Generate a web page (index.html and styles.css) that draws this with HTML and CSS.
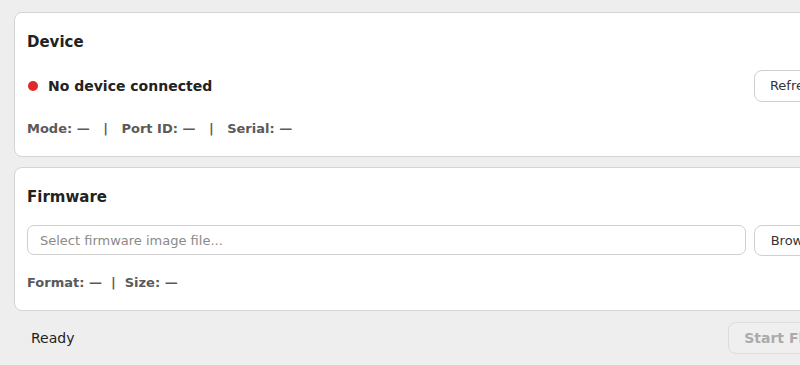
FILE: index.html
```html
<!DOCTYPE html>
<html lang="en">
<head>
	<meta charset="UTF-8">
	<title>Firmware Flasher</title>
	<link rel="stylesheet" href="styles.css">
</head>
<body>
	<div class="app">
		<!-- device -->
		<div class="card">
			<div class="card-title">Device</div>
			<div class="row">
				<span class="dot"></span>
				<span class="status-text">No device connected</span>
				<button class="btn btn-right">Refresh</button>
			</div>
			<div class="meta meta-wide">
				<span>Mode: —</span><span class="sep">|</span>
				<span>Port ID: —</span><span class="sep">|</span>
				<span>Serial: —</span>
			</div>
		</div>
		<!-- firmware -->
		<div class="card">
			<div class="card-title">Firmware</div>
			<div class="row row-file">
				<input type="text" class="file-input" placeholder="Select firmware image file...">
				<button class="btn">Browse</button>
			</div>
			<div class="meta">
				<span>Format: —</span><span class="sep">|</span>
				<span>Size: —</span>
			</div>
		</div>
		<!-- status bar -->
		<div class="footer">
			<span class="ready">Ready</span>
			<button class="btn btn-flash" disabled>Start Flash</button>
		</div>
	</div>
</body>
</html>
```

FILE: styles.css
```css
*{
	margin:0;
	padding:0;
	box-sizing:border-box;
}
html,body{
	overflow:hidden;
}
body{
	background:#eeeeee;
	font-family:"DejaVu Sans",Verdana,sans-serif;
	color:#222;
}
.app{
	width:862px;
	padding:12px 14px 11px;
	display:flex;
	flex-direction:column;
	gap:10px;
}
/*---------------- card ----------------*/
.card{
	background:#fff;
	border:1px solid #d4d4d4;
	border-radius:8px;
	padding:20px 12px;
	display:flex;
	flex-direction:column;
	gap:19px;
}
.card-title{
	font-size:15px;
	font-weight:bold;
	color:#222;
}
.row{
	display:flex;
	align-items:center;
	height:32px;
}
.row-file{
	height:31px;
	align-items:flex-start;
	gap:8px;
}
.dot{
	width:10px;
	height:10px;
	border-radius:50%;
	background:#e0282b;
	margin:0 10px 0 1px;
}
.status-text{
	font-size:14px;
	font-weight:bold;
	color:#222;
}
.btn-right{
	margin-left:auto;
	margin-top:-1px;
}
/*---------------- buttons ----------------*/
.btn{
	height:32px;
	padding:0 15px;
	font-family:inherit;
	font-size:13px;
	color:#333;
	background:#fff;
	border:1px solid #cfcfcf;
	border-radius:8px;
	white-space:nowrap;
}
.row-file .btn{
	height:31px;
	padding:0 16px;
}
.file-input{
	flex:1;
	height:30px;
	padding:0 12px;
	font-family:inherit;
	font-size:13px;
	color:#333;
	border:1px solid #cfcfcf;
	border-radius:7px;
	outline:none;
}
.file-input::placeholder{
	color:#8a8a8a;
}
/*---------------- meta ----------------*/
.meta{
	font-size:13px;
	font-weight:bold;
	color:#5a5a5a;
	display:flex;
}
.sep{
	margin:0 9px;
}
.meta-wide .sep{
	margin:0 13.5px;
}
/*---------------- footer ----------------*/
.footer{
	display:flex;
	align-items:center;
	justify-content:space-between;
	padding:1px 0 0 17px;
}
.ready{
	font-size:14px;
	color:#222;
}
.btn-flash{
	padding:0 16px 0 15px;
	font-size:14px;
	font-weight:bold;
	color:#ababab;
	background:#efefef;
	border-color:#dcdcdc;
}
```
